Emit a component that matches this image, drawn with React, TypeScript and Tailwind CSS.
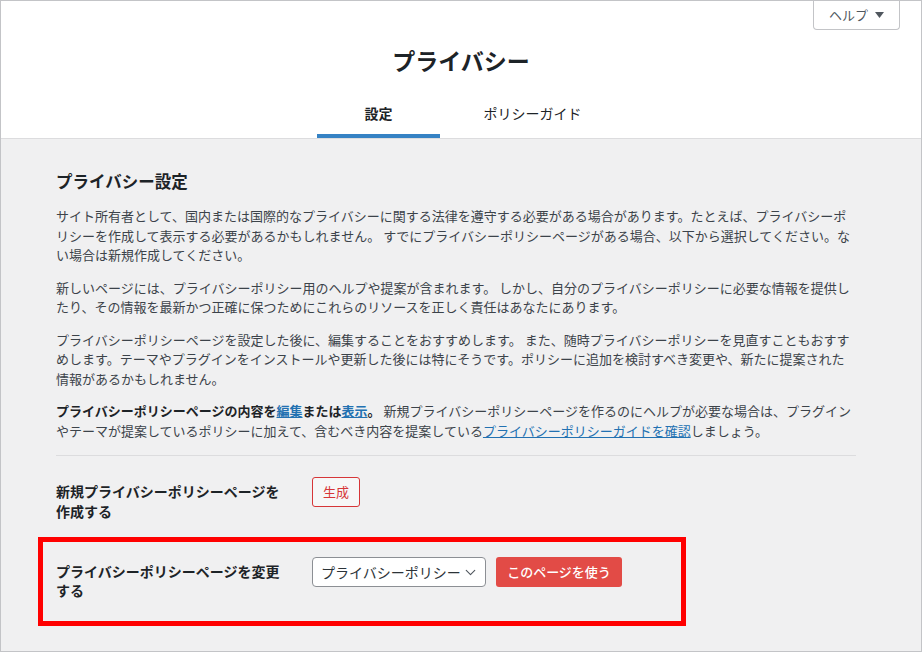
import { ChevronDown } from 'lucide-react';

// Privacy settings screen (WP admin style)

const font = {
  fontFamily: '"Noto Sans CJK JP", "Noto Sans", sans-serif',
};

function HelpButton() {
  return (
    <div className="flex justify-end pr-[21px]">
      <button className="flex h-[29px] w-[87px] items-center justify-center gap-[7px] rounded-b-[4px] border border-t-0 border-[#c3c4c7] bg-white text-[13px] text-[#50575e]">
        <span>ヘルプ</span>
        <svg width="9" height="6" viewBox="0 0 9 6">
          <path d="M0 0 H9 L4.5 6 Z" fill="#50575e" />
        </svg>
      </button>
    </div>
  );
}

function Header() {
  return (
    <div className="border-b border-[#dcdcde] bg-white">
      <HelpButton />
      <h1 className="mt-[14px] text-center text-[23px] font-bold leading-[32px] text-[#1d2327]">
        プライバシー
      </h1>
      <div className="mr-[11px] mt-[21px] flex justify-center gap-[31px]">
        <div className="flex h-[41px] w-[123px] items-start justify-center border-b-[4px] border-[#3582c4] pt-[6px] text-[14px] font-semibold text-[#1d2327]">
          設定
        </div>
        <div className="flex h-[41px] w-[123px] items-start justify-center pt-[6px] text-[14px] text-[#1d2327]">
          ポリシーガイド
        </div>
      </div>
    </div>
  );
}

function Para({ children }: { children: React.ReactNode }) {
  return (
    <p className="my-[13px] text-[13px] leading-[19.5px] text-[#3c434a]">
      {children}
    </p>
  );
}

function Link({ children }: { children: React.ReactNode }) {
  return <a className="text-[#2271b1] underline">{children}</a>;
}

export default function App() {
  return (
    <div
      style={font}
      className="h-[652px] w-[922px] overflow-hidden border border-[#c3c4c7] bg-[#f0f0f1]"
    >
      <Header />

      <div className="w-[855px] pl-[55px] pt-[30px]">
        <h2 className="mb-[12px] text-[16.5px] font-bold leading-[24px] text-[#1d2327]">
          プライバシー設定
        </h2>
        <Para>
          サイト所有者として、国内または国際的なプライバシーに関する法律を遵守する必要がある場合があります。たとえば、プライバシーポリシーを作成して表示する必要があるかもしれません。
          すでにプライバシーポリシーページがある場合、以下から選択してください。ない場合は新規作成してください。
        </Para>
        <Para>
          新しいページには、プライバシーポリシー用のヘルプや提案が含まれます。
          しかし、自分のプライバシーポリシーに必要な情報を提供したり、その情報を最新かつ正確に保つためにこれらのリソースを正しく責任はあなたにあります。
        </Para>
        <Para>
          プライバシーポリシーページを設定した後に、編集することをおすすめします。
          また、随時プライバシーポリシーを見直すこともおすすめします。テーマやプラグインをインストールや更新した後には特にそうです。ポリシーに追加を検討すべき変更や、新たに提案された情報があるかもしれません。
        </Para>
        <Para>
          <strong className="font-bold text-[#1d2327]">
            プライバシーポリシーページの内容を<Link>編集</Link>または
            <Link>表示</Link>。
          </strong>{' '}
          新規プライバシーポリシーページを作るのにヘルプが必要な場合は、プラグインやテーマが提案しているポリシーに加えて、含むべき内容を提案している
          <Link>プライバシーポリシーガイドを確認</Link>しましょう。
        </Para>

        <hr className="mt-[15px] border-t border-[#dcdcde]" />

        {/* create new page */}
        <div className="flex items-start pt-[21px]">
          <div className="mt-[4px] w-[256px] pr-[24px] text-[14px] font-bold leading-[20px] text-[#1d2327]">
            新規プライバシーポリシーページを作成する
          </div>
          <button className="h-[30px] w-[48px] rounded-[3px] border border-[#d63638] bg-[#f6f7f7] text-[13px] text-[#d63638]">
            生成
          </button>
        </div>

        {/* change page, highlighted */}
        <div className="-ml-[18px] mt-[16px] flex h-[89px] w-[648px] items-start border-[5px] border-[#ff0000] pl-[13px] pt-[15px]">
          <div className="mt-[5px] w-[256px] pr-[24px] text-[14px] font-bold leading-[19px] text-[#1d2327]">
            プライバシーポリシーページを変更する
          </div>
          <div className="flex items-center gap-[10px]">
            <div className="flex h-[30px] w-[174px] items-center justify-between rounded-[4px] border border-[#8c8f94] bg-white pl-[8px] pr-[6px] text-[14px] text-[#2c3338]">
              <span>プライバシーポリシー</span>
              <ChevronDown size={17} strokeWidth={1.6} className="text-[#50575e]" />
            </div>
            <button className="h-[30px] w-[126px] rounded-[3px] bg-[#e24b46] text-[13px] font-medium text-white">
              このページを使う
            </button>
          </div>
        </div>
      </div>
    </div>
  );
}
